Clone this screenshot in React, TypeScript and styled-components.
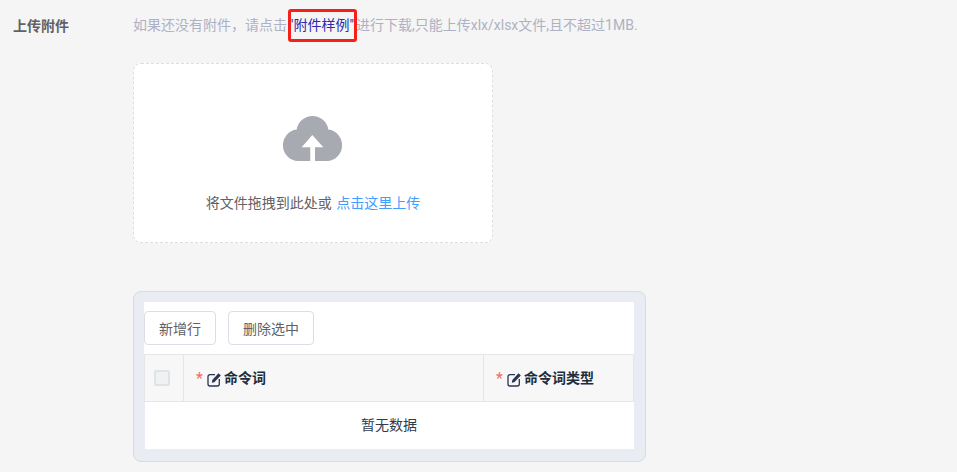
import React from 'react'
import styled, { createGlobalStyle } from 'styled-components';

const GlobalStyle = createGlobalStyle`
  html, body {
    margin: 0;
    padding: 0;
    background: #f5f5f5;
    font-family: Roboto, "Noto Sans CJK SC", sans-serif;
    font-size: 14px;
  }
`;

const Page = styled.div`
  width: 957px;
  height: 472px;
  overflow: hidden;
  display: grid;
  grid-template-columns: 133px 1fr;
  box-sizing: border-box;
  padding-top: 8px;
`;

const Label = styled.div`
  padding-left: 13px;
  line-height: 36px;
  font-weight: 700;
  color: #606266;
`;

const Content = styled.div`
  display: flex;
  flex-direction: column;
  align-items: flex-start;
`;

const Hint = styled.div`
  height: 34px;
  line-height: 34px;
  color: #aeb1c3;
  white-space: nowrap;
`;

const SampleLink = styled.span`
  position: relative;
  color: #2a2ab0;
  margin: 0 1px;
  padding: 0 1px;

  &::after {
    content: "";
    position: absolute;
    left: 0;
    right: -2px;
    top: -8px;
    bottom: -9px;
    border: 3px solid #f5201a;
    border-radius: 3px;
  }
`;

const Dropzone = styled.div`
  margin-top: 21px;
  width: 360px;
  height: 180px;
  box-sizing: border-box;
  background: #fff;
  border: 1px dashed #dcdde2;
  border-radius: 8px;
  display: flex;
  flex-direction: column;
  align-items: center;
  padding-top: 52px;
`;

const CloudIcon = styled.svg`
  width: 59px;
  height: 45px;
  flex: none;
  margin-right: 1px;
`;

const DropText = styled.div`
  margin-top: 32px;
  line-height: 20px;
  color: #606266;
`;

const DropLink = styled.span`
  color: #409eff;
  margin-left: 1px;
`;

const TablePanel = styled.div`
  margin-top: 48px;
  width: 513px;
  height: 171px;
  box-sizing: border-box;
  background: #e9ecf3;
  border: 1px solid #dadbdf;
  border-radius: 8px;
  padding: 10px 11px 10px 10px;
`;

const TableInner = styled.div`
  height: 147px;
  display: flex;
  flex-direction: column;
`;

const Toolbar = styled.div`
  display: flex;
  gap: 12px;
  padding-top: 9px;
  height: 52px;
  box-sizing: border-box;
  align-items: flex-start;
  background: #fff;
`;

const ToolButton = styled.button<{ $width: number }>`
  width: ${p => p.$width}px;
  height: 34px;
  box-sizing: border-box;
  padding: 0;
  background: #fff;
  border: 1px solid #dcdde6;
  border-radius: 4px;
  color: #606266;
  font-family: inherit;
  font-size: 14px;
`;

const HeaderRow = styled.div`
  display: grid;
  grid-template-columns: 39px 300px 150px;
  height: 48px;
  box-sizing: border-box;
  background: #f7f7f7;
  border: 1px solid #e6e6e8;
  border-right: 0;
`;

const HeaderCell = styled.div`
  display: flex;
  align-items: center;
  padding: 0 0 2px 12px;
  border-right: 1px solid #e6e6e8;
  font-weight: 700;
  color: #1f2d3d;
`;

const CheckCell = styled.div`
  display: flex;
  align-items: center;
  padding-left: 9px;
  border-right: 1px solid #e6e6e8;
`;

const CheckBox = styled.span`
  width: 16px;
  height: 16px;
  box-sizing: border-box;
  background: #f0f1f3;
  border: 2px solid #dfe2e6;
  border-radius: 2px;
`;

const Star = styled.span`
  color: #f56c6c;
  font-weight: 400;
  font-size: 16px;
  line-height: 16px;
  margin: 4px 4px 0 0;
  width: 7px;
`;

const EditIcon = styled.svg`
  width: 14px;
  height: 14px;
  margin: 5px 3px 0 0;
`;

const EmptyRow = styled.div`
  flex: 1;
  width: 489px;
  margin-left: 1px;
  box-sizing: border-box;
  padding: 0 1px 3px 0;
  display: flex;
  align-items: center;
  justify-content: center;
  color: #303b4d;
  background: #fff;
`;

const Edit = () => (
  <EditIcon viewBox="0 0 14 14">
    <path d="M8 1.700H3a2 2 0 0 0-2 2V11a2 2 0 0 0 2 2h7.300a2 2 0 0 0 2-2V6" fill="none" stroke="#2b3553" strokeWidth="1.300" />
    <path d="M11.500 0.300L13.800 2.500L7.300 9.300L4.800 9.800L5.300 7Z" fill="#2b3553" />
  </EditIcon>
);

const Cloud = () => (
  <CloudIcon viewBox="0 0 59 45">
    <path d="M15 45A15.500 15.800 0 0 1 13.700 13.500A16 16 0 0 1 45.300 13.500A15.500 15.800 0 0 1 44 45Z" fill="#a8aab1" />
    <path d="M29.300 19L40.300 31.300H32V45H27.300V31.300H18.700Z" fill="#fff" />
  </CloudIcon>
);

export default function App() {
  return (
    <>
      <GlobalStyle />
      <Page>
        <Label>上传附件</Label>
        <Content>
          <Hint>
            如果还没有附件，请点击<SampleLink>"附件样例"</SampleLink>进行下载,只能上传xlx/xlsx文件,且不超过1MB.
          </Hint>
          <Dropzone>
            <Cloud />
            <DropText>将文件拖拽到此处或 <DropLink>点击这里上传</DropLink></DropText>
          </Dropzone>
          <TablePanel>
            <TableInner>
              <Toolbar>
                <ToolButton $width={72}>新增行</ToolButton>
                <ToolButton $width={86}>删除选中</ToolButton>
              </Toolbar>
              <HeaderRow>
                <CheckCell><CheckBox /></CheckCell>
                <HeaderCell><Star>*</Star><Edit />命令词</HeaderCell>
                <HeaderCell><Star>*</Star><Edit />命令词类型</HeaderCell>
              </HeaderRow>
              <EmptyRow>暂无数据</EmptyRow>
            </TableInner>
          </TablePanel>
        </Content>
      </Page>
    </>
  )
}
